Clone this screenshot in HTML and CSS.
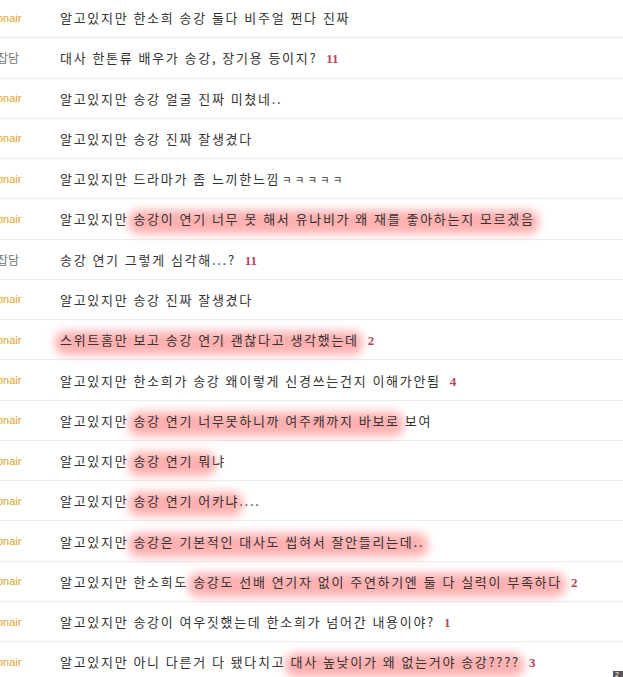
FILE: index.html
```html
<html>
  <head>
    <meta charset="UTF-8" />
    <link rel="stylesheet" href="styles.css">
  </head>
  <body>
    <ul class="boardList">
      <li class="boardRow"><span class="cat onair">onair</span><span class="title">알고있지만 한소희 송강 둘다 비주얼 쩐다 진짜</span></li>
      <li class="boardRow"><span class="cat talk">잡담</span><span class="title">대사 한톤류 배우가 송강, 장기용 등이지?<span class="cmt">11</span></span></li>
      <li class="boardRow"><span class="cat onair">onair</span><span class="title">알고있지만 송강 얼굴 진짜 미쳤네..</span></li>
      <li class="boardRow"><span class="cat onair">onair</span><span class="title">알고있지만 송강 진짜 잘생겼다</span></li>
      <li class="boardRow"><span class="cat onair">onair</span><span class="title">알고있지만 드라마가 좀 느끼한느낌<span class="small">ㅋㅋㅋㅋㅋ</span></span></li>
      <li class="boardRow"><span class="cat onair">onair</span><span class="title">알고있지만 <span class="hl">송강이 연기 너무 못 해서 유나비가 왜 재를 좋아하는지 모르겠음</span></span></li>
      <li class="boardRow"><span class="cat talk">잡담</span><span class="title">송강 연기 그렇게 심각해...?<span class="cmt">11</span></span></li>
      <li class="boardRow"><span class="cat onair">onair</span><span class="title">알고있지만 송강 진짜 잘생겼다</span></li>
      <li class="boardRow"><span class="cat onair">onair</span><span class="title"><span class="hl">스위트홈만 보고 송강 연기 괜찮다고 생각했는데</span><span class="cmt">2</span></span></li>
      <li class="boardRow"><span class="cat onair">onair</span><span class="title">알고있지만 한소희가 송강 왜이렇게 신경쓰는건지 이해가안됨<span class="cmt">4</span></span></li>
      <li class="boardRow"><span class="cat onair">onair</span><span class="title">알고있지만 <span class="hl">송강 연기 너무못하니까 여주캐까지 바보로</span> 보여</span></li>
      <li class="boardRow"><span class="cat onair">onair</span><span class="title">알고있지만 <span class="hl">송강 연기 뭐</span>냐</span></li>
      <li class="boardRow"><span class="cat onair">onair</span><span class="title">알고있지만 <span class="hl">송강 연기 어카냐</span>....</span></li>
      <li class="boardRow"><span class="cat onair">onair</span><span class="title">알고있지만 <span class="hl">송강은 기본적인 대사도 씹혀서 잘안들리는데..</span></span></li>
      <li class="boardRow"><span class="cat onair">onair</span><span class="title">알고있지만 한소희도 <span class="hl">송강도 선배 연기자 없이 주연하기엔 둘 다 실력이 부족하다</span><span class="cmt">2</span></span></li>
      <li class="boardRow"><span class="cat onair">onair</span><span class="title">알고있지만 송강이 여우짓했는데 한소희가 넘어간 내용이야?<span class="cmt">1</span></span></li>
      <li class="boardRow"><span class="cat onair">onair</span><span class="title">알고있지만 아니 다른거 다 됐다치고 <span class="hl">대사 높낮이가 왜 없는거야 송강????</span><span class="cmt">3</span></span></li>
    </ul>
    <div class="pageBadge">2</div>
  </body>
</html>
```

FILE: styles.css
```css
body {
  margin: 0;
  background: #fff;
  overflow: hidden;
  font-family: 'Noto Sans CJK KR', 'Liberation Sans', sans-serif;
}
.boardList {
  list-style: none;
  margin: -2px 0 0 0;
  padding: 0;
}
.boardRow {
  display: flex;
  align-items: center;
  box-sizing: border-box;
  height: 40.27px;
  border-bottom: 1px solid #ececec;
}
.cat {
  width: 63px;
  margin-left: -3px;
  flex-shrink: 0;
  font-size: 12px;
}
.onair {
  font-family: 'Liberation Sans', sans-serif;
  font-size: 11px;
  color: #e0a42c;
}
.talk {
  color: #777;
}
.title {
  font-size: 13px;
  color: #333;
  letter-spacing: 1.7px;
  word-spacing: 0.5px;
  white-space: nowrap;
}
.small {
  font-size: 10px;
  word-spacing: 0;
  letter-spacing: 3.5px;
  margin-left: 2px;
}
.hl {
  position: relative;
  isolation: isolate;
}
.hl::before {
  content: '';
  position: absolute;
  top: 1px;
  bottom: -6px;
  left: -5px;
  right: -4px;
  z-index: -1;
  border-radius: 10px;
  background: rgba(255, 90, 90, 0.48);
  filter: blur(5px);
}
.cmt {
  margin-left: 9px;
  font-family: 'Liberation Serif', serif;
  font-weight: bold;
  font-size: 13px;
  letter-spacing: 0;
  color: #b5475e;
}
.pageBadge {
  position: fixed;
  right: -4px;
  bottom: 0;
  width: 12px;
  height: 6px;
  background: #555;
  color: #fff;
  font-family: 'Liberation Sans', sans-serif;
  font-size: 7px;
  line-height: 8px;
  padding-left: 2px;
  overflow: hidden;
}
```
